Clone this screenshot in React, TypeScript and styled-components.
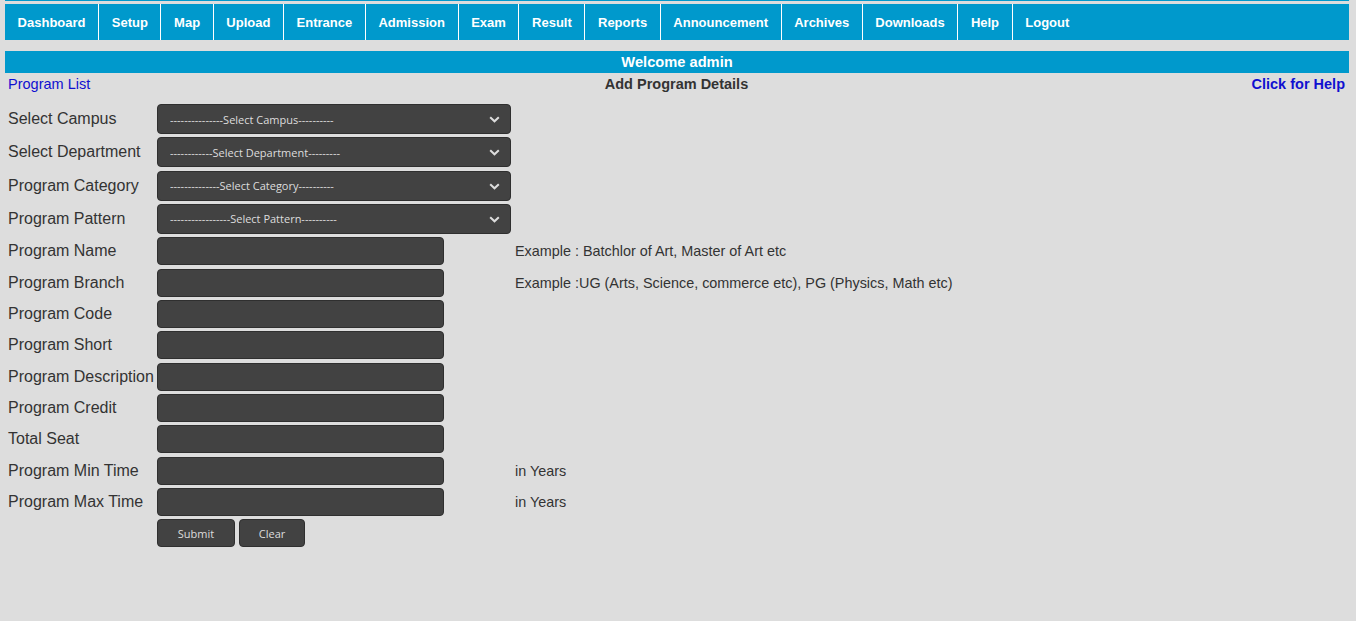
import React from "react";
import styled, { createGlobalStyle } from "styled-components";

const Global = createGlobalStyle`
  html, body { margin: 0; padding: 0; }
  body {
    background: #dddddd;
    font-family: "Liberation Sans", Arial, sans-serif;
    color: #333333;
  }
`;

const Page = styled.div`
  padding: 0 7px 0 5px;
`;

const TopLine = styled.div`
  height: 1px;
  background: #0099cc;
  margin-bottom: 3px;
`;

const Nav = styled.nav`
  display: flex;
  height: 36px;
  background: #0099cc;
`;

const NavItem = styled.a`
  display: flex;
  align-items: center;
  padding: 0 12.62px;
  border-right: 1px solid #ffffff;
  color: #ffffff;
  font-weight: bold;
  font-size: 13px;
  text-decoration: none;
  &:last-child { border-right: none; }
`;

const Welcome = styled.div`
  margin-top: 11px;
  height: 22px;
  line-height: 22px;
  background: #0099cc;
  color: #ffffff;
  font-weight: bold;
  font-size: 14.67px;
  text-align: center;
`;

const InfoRow = styled.div`
  display: grid;
  grid-template-columns: 1fr auto 1fr;
  align-items: center;
  height: 22px;
  padding: 0 4px 0 3px;
  font-size: 14.5px;
`;

const Link = styled.a<{ $bold?: boolean; $right?: boolean }>`
  color: #1010d0;
  text-decoration: none;
  font-weight: ${(p) => (p.$bold ? "bold" : "normal")};
  justify-self: ${(p) => (p.$right ? "end" : "start")};
`;

const Title = styled.div`
  font-weight: bold;
  color: #333333;
`;

const Form = styled.form`
  display: grid;
  grid-template-columns: 145px 354px auto;
  column-gap: 4px;
  row-gap: 3.333px;
  align-items: center;
  margin-top: 9px;
  padding-left: 3px;
`;

const Label = styled.label`
  font-size: 16px;
  color: #333333;
  white-space: nowrap;
  grid-column: 1;
`;

const Hint = styled.div`
  font-size: 14.4px;
  color: #333333;
  grid-column: 3;
`;

const SelectWrap = styled.div`
  position: relative;
  grid-column: 2;
  height: 30px;
`;

const Select = styled.select`
  appearance: none;
  -webkit-appearance: none;
  width: 100%;
  height: 30px;
  box-sizing: border-box;
  margin: 0;
  padding: 0 30px 0 12px;
  background: #424242;
  border: 1px solid #2f2f2f;
  border-radius: 4px;
  color: #dddddd;
  font-family: "Open Sans", sans-serif;
  font-size: 11px;
  outline: none;
`;

const Chevron = styled.svg`
  position: absolute;
  right: 11px;
  top: 12px;
  pointer-events: none;
`;

const Input = styled.input`
  grid-column: 2;
  width: 287px;
  height: 28px;
  box-sizing: border-box;
  margin: 0;
  background: #424242;
  border: 1px solid #2f2f2f;
  border-radius: 4px;
  color: #dddddd;
  outline: none;
`;

const Buttons = styled.div`
  grid-column: 2;
  display: flex;
  gap: 4px;
`;

const Button = styled.button<{ $w: number }>`
  width: ${(p) => p.$w}px;
  height: 28px;
  box-sizing: border-box;
  background: #424242;
  border: 1px solid #2f2f2f;
  border-radius: 4px;
  color: #dddddd;
  font-family: "Open Sans", sans-serif;
  font-size: 11px;
  padding: 0;
`;

const navItems = [
  "Dashboard", "Setup", "Map", "Upload", "Entrance", "Admission", "Exam",
  "Result", "Reports", "Announcement", "Archives", "Downloads", "Help", "Logout",
];

const d = (n: number) => "-".repeat(n);

const selects = [
  { label: "Select Campus", text: `${d(15)}Select Campus${d(10)}` },
  { label: "Select Department", text: `${d(12)}Select Department${d(9)}` },
  { label: "Program Category", text: `${d(14)}Select Category${d(10)}` },
  { label: "Program Pattern", text: `${d(17)}Select Pattern${d(10)}` },
];

const inputs: { label: string; hint?: string }[] = [
  { label: "Program Name", hint: "Example : Batchlor of Art, Master of Art etc" },
  { label: "Program Branch", hint: "Example :UG (Arts, Science, commerce etc), PG (Physics, Math etc)" },
  { label: "Program Code" },
  { label: "Program Short" },
  { label: "Program Description" },
  { label: "Program Credit" },
  { label: "Total Seat" },
  { label: "Program Min Time", hint: "in Years" },
  { label: "Program Max Time", hint: "in Years" },
];

export default function App() {
  return (
    <Page>
      <Global />
      <TopLine />
      <Nav>
        {navItems.map((n) => (
          <NavItem key={n} href="#">{n}</NavItem>
        ))}
      </Nav>
      <Welcome>Welcome admin</Welcome>
      <InfoRow>
        <Link href="#">Program List</Link>
        <Title>Add Program Details</Title>
        <Link href="#" $bold $right>Click for Help</Link>
      </InfoRow>
      <Form onSubmit={(e) => e.preventDefault()}>
        {selects.map((s) => (
          <React.Fragment key={s.label}>
            <Label>{s.label}</Label>
            <SelectWrap>
              <Select defaultValue="">
                <option value="">{s.text}</option>
              </Select>
              <Chevron width="11" height="7" viewBox="0 0 11 7">
                <polyline points="1.2,1.2 5.5,5.3 9.8,1.2" fill="none" stroke="#dddddd" strokeWidth="2" />
              </Chevron>
            </SelectWrap>
          </React.Fragment>
        ))}
        {inputs.map((i) => (
          <React.Fragment key={i.label}>
            <Label>{i.label}</Label>
            <Input type="text" />
            {i.hint && <Hint>{i.hint}</Hint>}
          </React.Fragment>
        ))}
        <Buttons>
          <Button $w={78} type="submit">Submit</Button>
          <Button $w={66} type="reset">Clear</Button>
        </Buttons>
      </Form>
    </Page>
  );
}
